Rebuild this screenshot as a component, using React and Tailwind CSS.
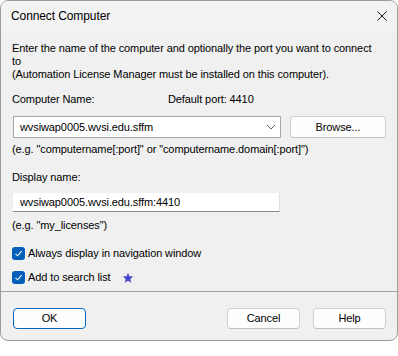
function Check() {
  return (
    <span className="flex h-[13px] w-[13px] items-center justify-center rounded-[3px] bg-[#005fb8]">
      <svg width="9" height="9" viewBox="0 0 9 9" fill="none">
        <path d="M1.5 4.8 L3.6 6.8 L7.6 2.2" stroke="#fff" strokeWidth="1.1" />
      </svg>
    </span>
  );
}

function Button({ children, primary, className = "" }) {
  return (
    <button
      className={
        "flex h-[21px] w-[73px] items-center justify-center rounded-[4px] border bg-[#fdfdfd] leading-[13px] " +
        (primary ? "border-[#0067c0] " : "border-[#d0d0d0] border-b-[#c0c0c0] ") +
        className
      }
    >
      {children}
    </button>
  );
}

export default function App() {
  return (
    <div
      className="h-[356px] w-[398px] bg-white text-[11px] tracking-[-0.1px] text-black"
      style={{ fontFamily: '"Liberation Sans", Arial, sans-serif' }}
    >
      <div className="flex h-[341px] flex-col overflow-hidden rounded-[8px] border border-[#9c9c9c] bg-[#f0f0f0]">
        <div className="flex h-[30px] shrink-0 items-center justify-between bg-[#f3f3f3] pl-[10px] pr-[10px]">
          <span className="text-[12px] tracking-[-0.1px]">Connect Computer</span>
          <svg width="10" height="10" viewBox="0 0 10 10" className="-mt-[1px]">
            <path d="M0.5 0.5 L9.5 9.5 M9.5 0.5 L0.5 9.5" stroke="#1a1a1a" strokeWidth="1" />
          </svg>
        </div>

        <div className="flex flex-col px-[11px]">
          <p className="mt-[11px] leading-[13px]">
            Enter the name of the computer and optionally the port you want to connect
            <br />
            to
            <br />
            (Automation License Manager must be installed on this computer).
          </p>

          <div className="mt-[12px] flex h-[13px] leading-[13px]">
            <span className="w-[156px]">Computer Name:</span>
            <span>Default port: 4410</span>
          </div>

          <div className="mt-[10px] flex h-[22px]">
            <div className="ml-[1px] flex w-[268px] items-center justify-between border border-[#a8a8a8] bg-white pl-[6px] pr-[4px]">
              <span>wvsiwap0005.wvsi.edu.sffm</span>
              <svg width="10" height="6" viewBox="0 0 10 6" fill="none">
                <path d="M1 1 L5 5 L9 1" stroke="#606060" strokeWidth="1" />
              </svg>
            </div>
            <button className="ml-[9px] flex w-[96px] items-center justify-center rounded-[4px] border border-[#d0d0d0] border-b-[#c0c0c0] bg-[#fdfdfd] leading-[13px]">
              Browse...
            </button>
          </div>

          <p className="mt-[5px] leading-[13px]">
            (e.g. "computername[:port]" or "computername.domain[:port]")
          </p>

          <p className="mt-[15px] leading-[13px]">Display name:</p>

          <div className="ml-[1px] mt-[9px] flex h-[19px] w-[267px] items-center border-b border-r border-b-[#8a8a8a] border-r-[#e0e0e0] bg-white pl-[7px]">
            wvsiwap0005.wvsi.edu.sffm:4410
          </div>

          <p className="mt-[7px] leading-[13px]">(e.g. "my_licenses")</p>

          <div className="mt-[15px] flex h-[13px] items-center gap-[3px] leading-[13px]">
            <Check />
            <span>Always display in navigation window</span>
          </div>

          <div className="mt-[11px] flex h-[13px] items-center gap-[3px] leading-[13px]">
            <Check />
            <span>Add to search list</span>
            <svg width="12" height="12" viewBox="0 0 24 24" className="ml-[8px]">
              <path
                d="M12 1.5 L14.9 8.6 L22.5 9.2 L16.7 14.1 L18.5 21.6 L12 17.6 L5.5 21.6 L7.3 14.1 L1.5 9.2 L9.1 8.6 Z"
                fill="#4848cc"
              />
            </svg>
          </div>

          <div className="-mx-[11px] mt-[7px] h-[1px] bg-[#a0a0a0]" />

          <div className="mt-[16px] flex">
            <Button primary className="ml-[1px]">OK</Button>
            <Button className="ml-[141px]">Cancel</Button>
            <Button className="ml-[13px]">Help</Button>
          </div>
        </div>
      </div>
    </div>
  );
}
